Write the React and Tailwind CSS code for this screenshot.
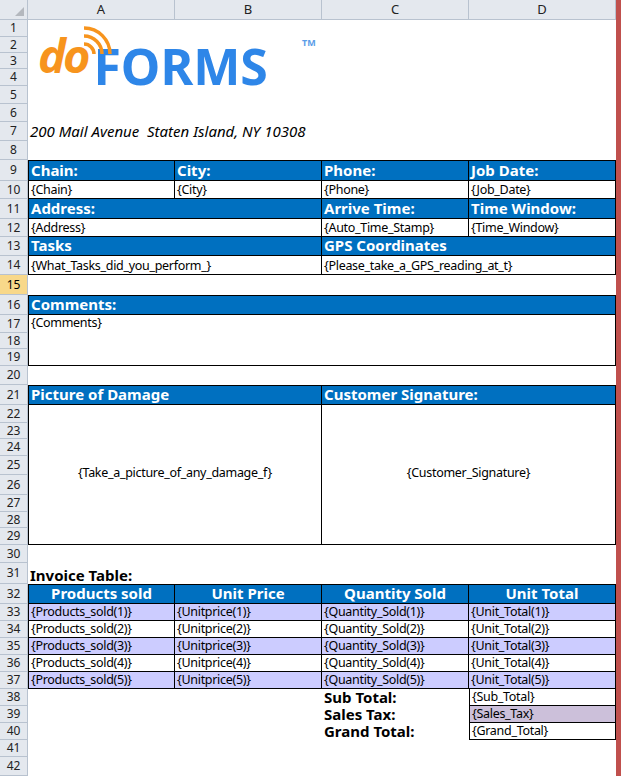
import React from "react";

const H = [17,16,16,17,18,18,19,19,21,18,20,18,19,19,20,20,18,16,17,19,20,18,16,17,19,20,17,16,17,18,21,20,17,17,17,17,17,17,17,17,17,19];

const CS = { 1: "col-start-2", 2: "col-start-3", 3: "col-start-4", 4: "col-start-5" };
const CSP = { 1: "col-span-1", 2: "col-span-2", 4: "col-span-4" };
const RS = [null,"row-start-2","row-start-3","row-start-4","row-start-5","row-start-6","row-start-7","row-start-8","row-start-9","row-start-10","row-start-11","row-start-12","row-start-13","row-start-14","row-start-15","row-start-16","row-start-17","row-start-18","row-start-19","row-start-20","row-start-21","row-start-22","row-start-23","row-start-24","row-start-25","row-start-26","row-start-27","row-start-28","row-start-29","row-start-30","row-start-31","row-start-32","row-start-33","row-start-34","row-start-35","row-start-36","row-start-37","row-start-38","row-start-39","row-start-40","row-start-41","row-start-42","row-start-43"];
const RSP = { 1: "row-span-1", 3: "row-span-3", 8: "row-span-8" };

const tops = [9, 16, 21, 32];
const SERIF = "font-['Liberation_Serif',serif]";
const SANS = "font-['Liberation_Sans',sans-serif]";

function Cell({ r, c, cs = 1, rs = 1, kind = "val", children, cls = "" }) {
  const t = tops.includes(r) || (r === 38 && c !== 4) ? "border-t" : "";
  const l = c === 1 || r >= 38 ? "border-l" : "";
  const base =
    kind === "head"
      ? `bg-[#0070c0] text-white font-bold text-[15px] ${SERIF} px-[2px]`
      : `text-[12.5px] tracking-[-0.3px] ${SANS} px-[2px] text-black`;
  return (
    <div className={`${CS[c]} ${CSP[cs]} ${RS[r]} ${RSP[rs]} border-r border-b border-black ${t} ${l} ${base} flex items-end leading-none pb-[2px] overflow-hidden whitespace-nowrap ${cls}`}>
      {children}
    </div>
  );
}

function Logo() {
  return (
    <div className="col-start-2 col-span-3 row-start-2 row-span-5 relative">
      <div className="absolute left-[10px] top-[12px] flex items-end">
        <span className="text-[47px] font-bold italic text-[#f7941d] font-['DejaVu_Sans',sans-serif] leading-none tracking-[-3px]">do</span>
        <svg width="40" height="34" viewBox="0 0 40 34" className="absolute left-[40px] top-[-6px]">
          <path d="M6 18 A10 10 0 0 1 16 28" stroke="#f7941d" strokeWidth="3.5" fill="none" />
          <path d="M6 10 A18 18 0 0 1 24 28" stroke="#f7941d" strokeWidth="3.5" fill="none" />
          <path d="M6 2 A26 26 0 0 1 32 28" stroke="#f7941d" strokeWidth="3.5" fill="none" />
        </svg>
        <span className="ml-[6px] mb-[-12px] text-[50px] font-bold text-[#2e86e8] font-['DejaVu_Serif',serif] leading-none tracking-[0px]">FORMS</span>
        <span className={`absolute left-[264px] top-[4px] text-[9px] font-bold text-[#5a9de8] ${SERIF}`}>TM</span>
      </div>
    </div>
  );
}

export default function App() {
  const rowsTpl = "grid-rows-[20px_17px_16px_16px_17px_18px_18px_19px_19px_21px_18px_20px_18px_19px_19px_20px_20px_18px_16px_17px_19px_20px_18px_16px_17px_19px_20px_17px_16px_17px_18px_21px_20px_17px_17px_17px_17px_17px_17px_17px_17px_17px_19px]";
  const hdr = `bg-[#e4e8ee] text-[#222] text-[12px] ${SANS} flex items-center justify-center border-r border-b border-[#b8c2cf]`;
  const tv = `${SERIF} font-bold text-[15px] text-black`;
  const prod = [1, 2, 3, 4, 5];
  return (
    <div className="w-[621px] h-[776px] overflow-hidden flex bg-white">
      <div className={`grid grid-cols-[28px_147px_147px_147px_147px] ${rowsTpl} w-[616px] h-[776px] overflow-hidden`}>
        <div className={`col-start-1 row-start-1 ${hdr} relative`}>
          <div className="absolute right-[3px] bottom-[3px] w-0 h-0 border-l-[9px] border-l-transparent border-b-[9px] border-b-[#b4b8be]" />
        </div>
        {["A", "B", "C", "D"].map((l, i) => (
          <div key={l} className={`${CS[i + 1]} row-start-1 ${hdr} text-[13px]`}>{l}</div>
        ))}
        {H.map((h, i) => (
          <div key={i} className={`col-start-1 ${RS[i + 1]} ${hdr} ${i + 1 === 15 ? "bg-[#f8d88a] text-black" : ""} text-[12.5px]`}>{i + 1}</div>
        ))}
        <Logo />
        <div className={`col-start-2 col-span-3 row-start-8 flex items-center pl-[2px] italic text-[15px] ${SERIF} text-black whitespace-nowrap`}>200 Mail Avenue&nbsp; Staten Island, NY 10308</div>

        <Cell r={9} c={1} kind="head">Chain:</Cell>
        <Cell r={9} c={2} kind="head">City:</Cell>
        <Cell r={9} c={3} kind="head">Phone:</Cell>
        <Cell r={9} c={4} kind="head">Job Date:</Cell>
        <Cell r={10} c={1}>{"{Chain}"}</Cell>
        <Cell r={10} c={2}>{"{City}"}</Cell>
        <Cell r={10} c={3}>{"{Phone}"}</Cell>
        <Cell r={10} c={4}>{"{Job_Date}"}</Cell>
        <Cell r={11} c={1} cs={2} kind="head">Address:</Cell>
        <Cell r={11} c={3} kind="head">Arrive Time:</Cell>
        <Cell r={11} c={4} kind="head">Time Window:</Cell>
        <Cell r={12} c={1} cs={2}>{"{Address}"}</Cell>
        <Cell r={12} c={3}>{"{Auto_Time_Stamp}"}</Cell>
        <Cell r={12} c={4}>{"{Time_Window}"}</Cell>
        <Cell r={13} c={1} cs={2} kind="head">Tasks</Cell>
        <Cell r={13} c={3} cs={2} kind="head">GPS Coordinates</Cell>
        <Cell r={14} c={1} cs={2}>{"{What_Tasks_did_you_perform_}"}</Cell>
        <Cell r={14} c={3} cs={2}>{"{Please_take_a_GPS_reading_at_t}"}</Cell>

        <Cell r={16} c={1} cs={4} kind="head">Comments:</Cell>
        <Cell r={17} c={1} cs={4} rs={3} cls="!items-start pt-[2px]">{"{Comments}"}</Cell>

        <Cell r={21} c={1} cs={2} kind="head">Picture of Damage</Cell>
        <Cell r={21} c={3} cs={2} kind="head">Customer Signature:</Cell>
        <Cell r={22} c={1} cs={2} rs={8} cls="!items-center justify-center">{"{Take_a_picture_of_any_damage_f}"}</Cell>
        <Cell r={22} c={3} cs={2} rs={8} cls="!items-center justify-center">{"{Customer_Signature}"}</Cell>

        <div className={`col-start-2 col-span-2 row-start-32 flex items-end pb-[1px] pl-[2px] leading-none ${tv}`}>Invoice Table:</div>
        {["Products sold", "Unit Price", "Quantity Sold", "Unit Total"].map((t, i) => (
          <Cell key={t} r={32} c={i + 1} kind="head" cls="justify-center">{t}</Cell>
        ))}
        {prod.map((n) => {
          const bg = n % 2 ? "bg-[#ccccff]" : "";
          return (
            <React.Fragment key={n}>
              <Cell r={32 + n} c={1} cls={bg}>{`{Products_sold(${n})}`}</Cell>
              <Cell r={32 + n} c={2} cls={bg}>{`{Unitprice(${n})}`}</Cell>
              <Cell r={32 + n} c={3} cls={bg}>{`{Quantity_Sold(${n})}`}</Cell>
              <Cell r={32 + n} c={4} cls={bg}>{`{Unit_Total(${n})}`}</Cell>
            </React.Fragment>
          );
        })}
        {[["Sub Total:", "{Sub_Total}", ""], ["Sales Tax:", "{Sales_Tax}", "bg-[#ccc0da]"], ["Grand Total:", "{Grand_Total}", ""]].map(([l, v, bg], i) => (
          <React.Fragment key={l}>
            <div className={`col-start-4 ${RS[38 + i]} flex items-end pb-[1px] pl-[2px] leading-none ${tv}`}>{l}</div>
            <Cell r={38 + i} c={4} cls={bg}>{v}</Cell>
          </React.Fragment>
        ))}
      </div>
      <div className="w-[5px] h-full bg-[#c0504d]" />
    </div>
  );
}
